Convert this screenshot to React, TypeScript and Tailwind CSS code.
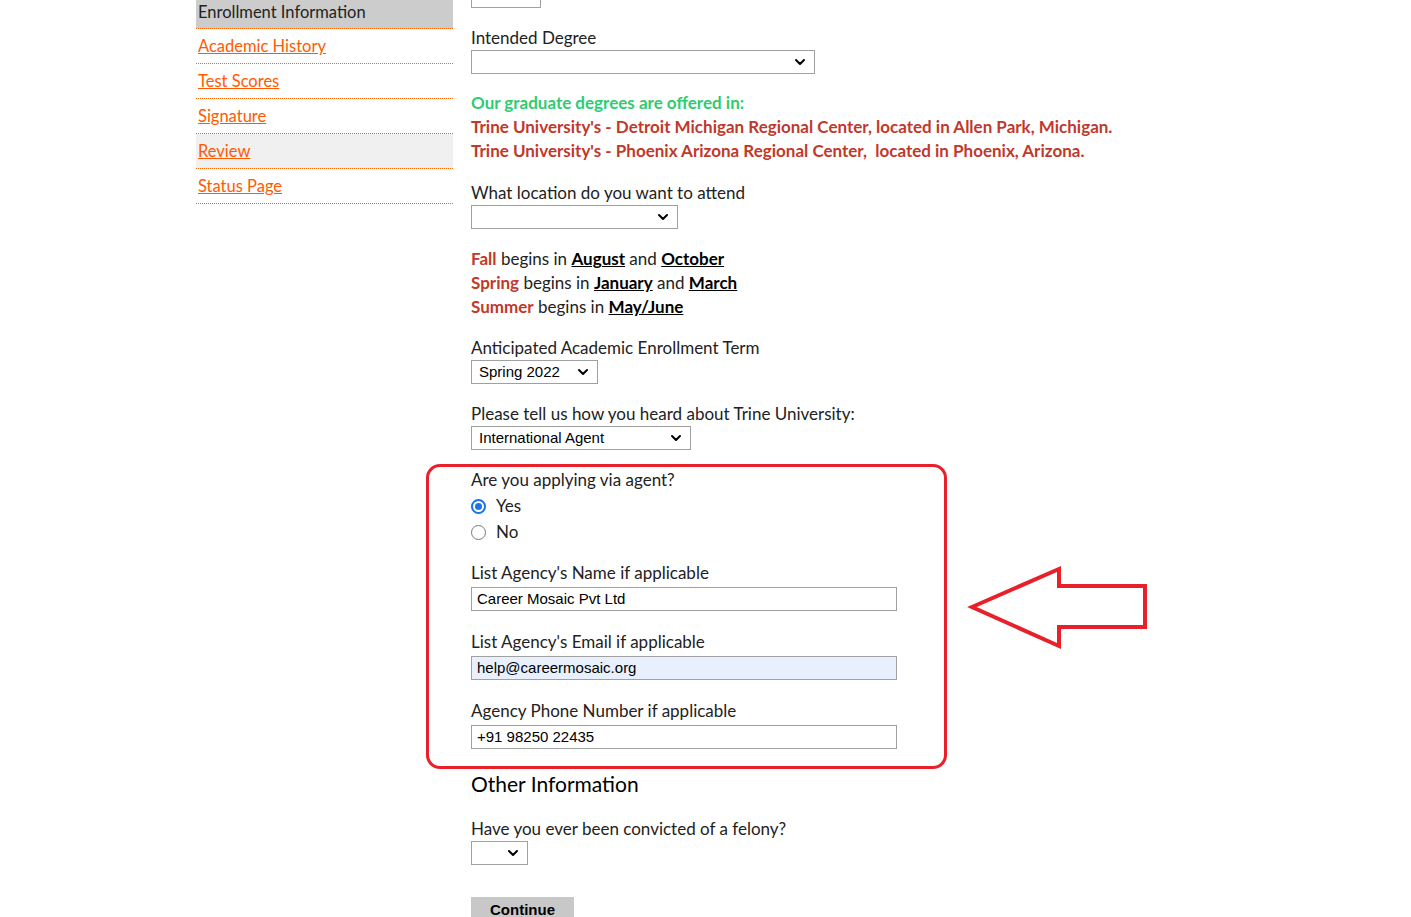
import { ChevronDown } from 'lucide-react';

const font = { fontFamily: "Lato, 'Noto Sans', sans-serif" };
const arial = { fontFamily: "'Liberation Sans', Arial, sans-serif" };

function Select({ w, value = '' }: { w: string; value?: string }) {
  return (
    <div
      className={`${w} h-[24px] border border-[#a0a0a0] bg-white flex items-center justify-between pl-[7px] pr-[6px] text-[15px] text-black`}
      style={arial}
    >
      <span>{value}</span>
      <ChevronDown className="w-4 h-4" strokeWidth={3} />
    </div>
  );
}

function Input({ value, blue }: { value: string; blue?: boolean }) {
  return (
    <div
      className={`mt-[2px] w-[426px] h-[24px] border border-[#a0a0a0] flex items-center px-[5px] text-[15px] text-black ${blue ? 'bg-[#e8f0fe]' : 'bg-white'}`}
      style={arial}
    >
      {value}
    </div>
  );
}

const nav = [
  { label: 'Academic History', bg: '' },
  { label: 'Test Scores', bg: '' },
  { label: 'Signature', bg: '' },
  { label: 'Review', bg: 'bg-[#f0f0f0]' },
  { label: 'Status Page', bg: '' },
];

export default function App() {
  return (
    <div className="relative w-[1411px] h-[917px] overflow-hidden bg-white text-[#222] text-[16px]" style={font}>
      <div className="flex gap-[18px] pl-[196px]">
        {/* sidebar */}
        <div className="w-[257px] shrink-0">
          <div className="h-[29px] bg-[#cccccc] border-b border-dotted border-[#ff6600] flex items-end pb-[6px] pl-[2px] text-[16.5px] leading-[20px] text-[#222]">
            Enrollment Information
          </div>
          {nav.map((n) => (
            <div key={n.label} className={`h-[35px] border-b border-dotted border-[#ff6600] flex items-center pl-[2px] ${n.bg}`}>
              <span className="text-[16.5px] text-[#ff5a00] underline">{n.label}</span>
            </div>
          ))}
        </div>

        {/* main */}
        <div className="flex flex-col text-[17px] leading-[24px]">
          <div className="w-[70px] h-[9px] border border-t-0 border-[#a0a0a0] -mt-px" />
          <div className="mt-[18px]">Intended Degree</div>
          <Select w="w-[344px]" />
          <div className="mt-[17px] font-bold text-[#2ecc71]">Our graduate degrees are offered in:</div>
          <div className="font-bold text-[#c0392b]">Trine University's - Detroit Michigan Regional Center, located in Allen Park, Michigan.</div>
          <div className="font-bold text-[#c0392b]">Trine University's - Phoenix Arizona Regional Center,&nbsp; located in Phoenix, Arizona.</div>
          <div className="mt-[18px]">What location do you want to attend</div>
          <Select w="w-[207px]" />
          <div className="mt-[18px]">
            <div><b className="text-[#c0392b]">Fall</b> begins in <b className="underline text-black">August</b> and <b className="underline text-black">October</b></div>
            <div><b className="text-[#c0392b]">Spring</b> begins in <b className="underline text-black">January</b> and <b className="underline text-black">March</b></div>
            <div><b className="text-[#c0392b]">Summer</b> begins in <b className="underline text-black">May/June</b></div>
          </div>
          <div className="mt-[17px]">Anticipated Academic Enrollment Term</div>
          <Select w="w-[127px]" value="Spring 2022" />
          <div className="mt-[18px]">Please tell us how you heard about Trine University:</div>
          <Select w="w-[220px]" value="International Agent" />
          <div className="mt-[18px]">Are you applying via agent?</div>
          <label className="flex items-center gap-[10px] mt-[2px]">
            <span className="w-[15px] h-[15px] rounded-full border-2 border-[#1a73e8] flex items-center justify-center">
              <span className="w-[7px] h-[7px] rounded-full bg-[#1a73e8]" />
            </span>
            Yes
          </label>
          <label className="flex items-center gap-[10px] mt-[2px]">
            <span className="w-[15px] h-[15px] rounded-full border border-[#777]" />
            No
          </label>
          <div className="mt-[17px]">List Agency's Name if applicable</div>
          <Input value="Career Mosaic Pvt Ltd" />
          <div className="mt-[19px]">List Agency's Email if applicable</div>
          <Input value="help@careermosaic.org" blue />
          <div className="mt-[19px]">Agency Phone Number if applicable</div>
          <Input value="+91 98250 22435" />
          <div className="mt-[20px] text-[21px] leading-[30px] text-black">Other Information</div>
          <div className="mt-[18px]">Have you ever been convicted of a felony?</div>
          <Select w="w-[57px]" />
          <button
            className="mt-[32px] w-[103px] h-[26px] bg-[#c8c8c8] text-[15px] font-bold text-black"
            style={arial}
          >
            Continue
          </button>
        </div>
      </div>

      {/* annotation overlay */}
      <div className="absolute left-[426px] top-[464px] w-[521px] h-[305px] border-[3px] border-[#e8202a] rounded-[14px] pointer-events-none" />
      <svg className="absolute left-[966px] top-[564px] pointer-events-none" width="184" height="88" viewBox="0 0 184 88">
        <polygon
          points="6,43 93,5 93,22 179,22 179,63 93,63 93,82"
          fill="none"
          stroke="#e8202a"
          strokeWidth="4"
          strokeLinejoin="miter"
        />
      </svg>
    </div>
  );
}
